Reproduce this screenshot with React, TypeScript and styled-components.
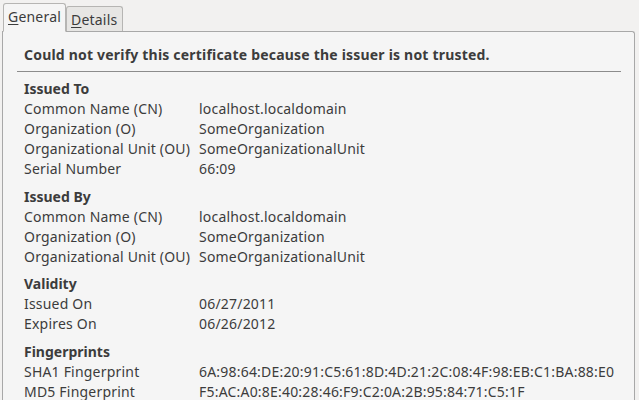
import React from "react";
import styled, { createGlobalStyle } from "styled-components";

const Global = createGlobalStyle`
  html, body { margin: 0; padding: 0; background: #f2f1f0; }
  body {
    font-family: "Noto Sans", "DejaVu Sans", sans-serif;
    font-size: 14px;
    letter-spacing: 0.2px;
    color: #3c3c3c;
    overflow: hidden;
  }
`;

const Window = styled.div`
  width: 639px;
  height: 400px;
  padding: 3px 4px 0 2px;
  box-sizing: border-box;
  display: flex;
  flex-direction: column;
`;

const TabBar = styled.div`
  display: flex;
  align-items: flex-end;
  padding-left: 1px;
  height: 29px;
  position: relative;
  z-index: 1;
  margin-bottom: -1px;
`;

const Tab = styled.div<{ $active?: boolean }>`
  height: ${(p) => (p.$active ? "29px" : "25px")};
  box-sizing: border-box;
  padding: ${(p) => (p.$active ? "0 4px 2px 4px" : "0 5px 0 4px")};
  display: flex;
  align-items: center;
  border: 1px solid #b6b5b3;
  border-bottom: ${(p) => (p.$active ? "1px solid #f5f5f5" : "none")};
  border-radius: 3px 3px 0 0;
  background: ${(p) => (p.$active ? "#f5f5f5" : "#e7e6e4")};
  margin-bottom: ${(p) => (p.$active ? "0" : "1px")};
`;

const Mn = styled.span`
  text-decoration: underline;
  text-underline-offset: 2px;
  text-decoration-thickness: 1px;
`;

const Panel = styled.div`
  flex: 1;
  background: #f5f5f5;
  border: 1px solid #a8a8a8;
  border-bottom: none;
  border-top-right-radius: 3px;
  padding: 13px 13px 0 21px;
`;

const Warning = styled.div`
  font-weight: bold;
  font-size: 14px;
  letter-spacing: 0.2px;
  line-height: 20px;
  padding-bottom: 6px;
  white-space: nowrap;
`;

const Separator = styled.div`
  height: 1px;
  background: #8c8c8c;
  margin: 0 0 7px -7px;
`;

const Group = styled.div`
  margin-bottom: 7.5px;
`;

const GroupTitle = styled.div`
  font-weight: bold;
  letter-spacing: 0;
  line-height: 20px;
`;

const Row = styled.div`
  display: grid;
  grid-template-columns: 175px 1fr;
  line-height: 20px;
  white-space: nowrap;
`;

const groups: { title: string; rows: [string, string][] }[] = [
  {
    title: "Issued To",
    rows: [
      ["Common Name (CN)", "localhost.localdomain"],
      ["Organization (O)", "SomeOrganization"],
      ["Organizational Unit (OU)", "SomeOrganizationalUnit"],
      ["Serial Number", "66:09"],
    ],
  },
  {
    title: "Issued By",
    rows: [
      ["Common Name (CN)", "localhost.localdomain"],
      ["Organization (O)", "SomeOrganization"],
      ["Organizational Unit (OU)", "SomeOrganizationalUnit"],
    ],
  },
  {
    title: "Validity",
    rows: [
      ["Issued On", "06/27/2011"],
      ["Expires On", "06/26/2012"],
    ],
  },
  {
    title: "Fingerprints",
    rows: [
      ["SHA1 Fingerprint", "6A:98:64:DE:20:91:C5:61:8D:4D:21:2C:08:4F:98:EB:C1:BA:88:E0"],
      ["MD5 Fingerprint", "F5:AC:A0:8E:40:28:46:F9:C2:0A:2B:95:84:71:C5:1F"],
    ],
  },
];

export default function App() {
  return (
    <>
      <Global />
      <Window>
        <TabBar>
          <Tab $active>
            <span><Mn>G</Mn>eneral</span>
          </Tab>
          <Tab>
            <span><Mn>D</Mn>etails</span>
          </Tab>
        </TabBar>
        <Panel>
          <Warning>Could not verify this certificate because the issuer is not trusted.</Warning>
          <Separator />
          {groups.map((g) => (
            <Group key={g.title}>
              <GroupTitle>{g.title}</GroupTitle>
              {g.rows.map(([k, v]) => (
                <Row key={k}>
                  <span>{k}</span>
                  <span>{v}</span>
                </Row>
              ))}
            </Group>
          ))}
        </Panel>
      </Window>
    </>
  );
}
